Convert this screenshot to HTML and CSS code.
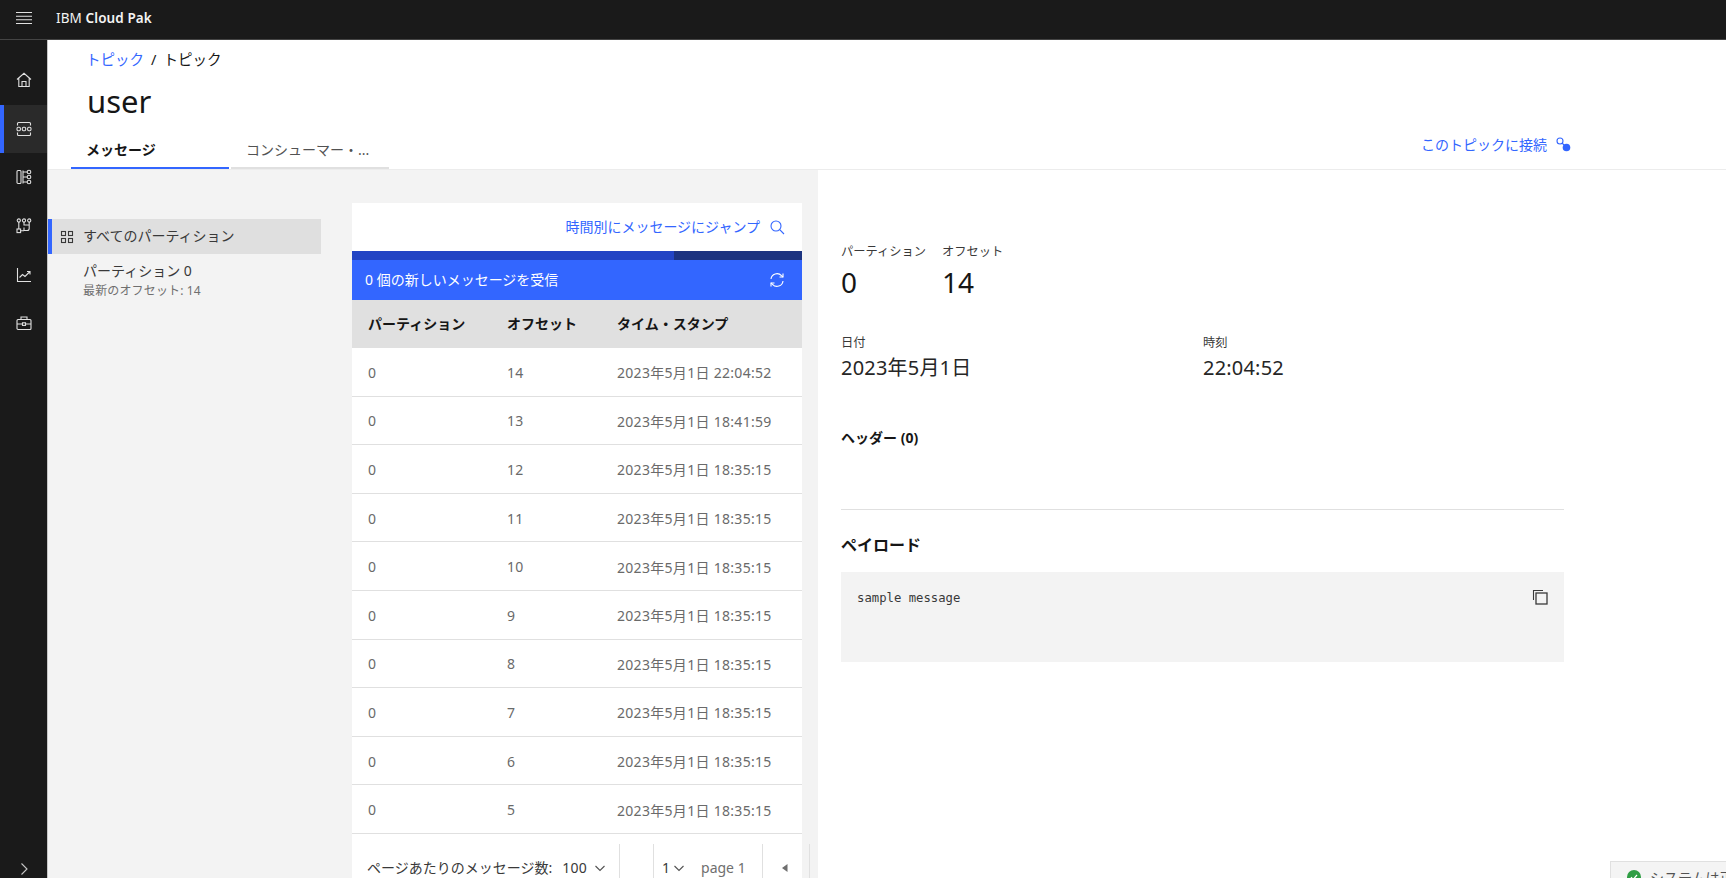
FILE: index.html
```html
<!DOCTYPE html>
<html lang="ja">
<head>
<meta charset="utf-8">
<title>user</title>
<link rel="stylesheet" href="styles.css">
</head>
<body>
<header class="topbar">
  <svg class="menu-icon" width="16" height="14" viewBox="0 0 16 14"><path d="M0 1.500h16M0 5.200h16M0 8.800h16M0 12.500h16" stroke="#e0e0e0" stroke-width="1.100" fill="none"/></svg>
  <span class="brand">IBM <b>Cloud Pak</b></span>
</header>
<div class="shell">
  <nav class="sidenav">
    <a class="nav-item"><svg class="nav-icon" viewBox="0 0 16 16"><path d="M1 7.500 8 1.300l7 6.200M2.800 6.200v8.300h10.400V6.200M6 14.500V9.500h4v5"/></svg></a>
    <a class="nav-item nav-active"><svg class="nav-icon" viewBox="0 0 16 16"><path d="M1.500 4.500V2.500a1 1 0 0 1 1-1h11a1 1 0 0 1 1 1v2M1.500 11.500v2a1 1 0 0 0 1 1h11a1 1 0 0 0 1-1v-2"/><rect x="1" y="6.300" width="3.400" height="3.400" rx="1.200"/><rect x="6.300" y="6.300" width="3.400" height="3.400" rx="1.200"/><rect x="11.600" y="6.300" width="3.400" height="3.400" rx="1.200"/></svg></a>
    <a class="nav-item"><svg class="nav-icon" viewBox="0 0 16 16"><rect x="1" y="1.500" width="4" height="13" rx="1"/><path d="M7 1.500v13M7 3h4M7 8h4M7 13h4"/><circle cx="13" cy="3" r="1.800"/><circle cx="13" cy="8" r="1.800"/><circle cx="13" cy="13" r="1.800"/></svg></a>
    <a class="nav-item"><svg class="nav-icon" viewBox="0 0 16 16"><circle cx="2.800" cy="2.500" r="1.600"/><circle cx="8" cy="2.500" r="1.600"/><circle cx="13.200" cy="2.500" r="1.600"/><rect x="1" y="11" width="3.600" height="3.600"/><path d="M2.800 4.100V11M8 4.100V7H13.200M13.200 4.100v6.400a2 2 0 0 1-2 2H8V9.500M4.600 12.800H8"/></svg></a>
    <a class="nav-item"><svg class="nav-icon" viewBox="0 0 16 16"><path d="M1.500 1v13.500H15M3.500 10.500l3-3 2.500 2L13.500 5M11 4.500h3V7.500"/></svg></a>
    <a class="nav-item"><svg class="nav-icon" viewBox="0 0 16 16"><rect x="1" y="4.500" width="14" height="10" rx="1"/><path d="M5 4.500V2h6v2.500M1 9h5M10 9h5"/><rect x="6.500" y="7.800" width="3" height="2.600"/></svg></a>
    <a class="nav-toggle"><svg width="16" height="16" viewBox="0 0 16 16"><path d="M5.500 2.500 11 8l-5.500 5.500" stroke="#c6c6c6" stroke-width="1.100" fill="none"/></svg></a>
  </nav>
  <main class="content">
    <section class="page-head">
      <div class="crumbs"><a class="link">トピック</a><span class="crumb-sep">/</span><span>トピック</span></div>
      <h1 class="title">user</h1>
      <div class="tab-row">
        <div class="tabs">
          <div class="tab tab-on">メッセージ</div>
          <div class="tab">コンシューマー・...</div>
        </div>
        <a class="connect link">このトピックに接続
          <svg width="16" height="16" viewBox="0 0 16 16"><circle cx="5" cy="5" r="3" fill="none" stroke="#3366ff" stroke-width="1.100"/><path d="M7 7l3 3" stroke="#3366ff" stroke-width="1.100"/><circle cx="11.500" cy="11.500" r="3.800" fill="#3366ff"/></svg>
        </a>
      </div>
    </section>
    <div class="panels">
      <aside class="partitions">
        <div class="part-all">
          <svg width="14" height="14" viewBox="0 0 14 14"><g fill="none" stroke="#393939" stroke-width="1.100"><rect x="1.500" y="1.500" width="4" height="4"/><rect x="8.500" y="1.500" width="4" height="4"/><rect x="1.500" y="8.500" width="4" height="4"/><rect x="8.500" y="8.500" width="4" height="4"/></g></svg>
          <span class="part-all-text">すべてのパーティション</span>
        </div>
        <div class="part-one">
          <div>パーティション 0</div>
          <div class="part-sub">最新のオフセット: 14</div>
        </div>
      </aside>
      <section class="table-card">
        <div class="jump link"><span class="lift">時間別にメッセージにジャンプ</span>
          <svg width="16" height="16" viewBox="0 0 16 16"><circle cx="7" cy="7" r="5" fill="none" stroke="#3366ff" stroke-width="1.100"/><path d="M10.700 10.700 15 15" stroke="#3366ff" stroke-width="1.100"/></svg>
        </div>
        <div class="progress"><div class="progress-dark"></div></div>
        <div class="notice"><span class="lift">0 個の新しいメッセージを受信</span>
          <svg width="16" height="16" viewBox="0 0 16 16"><g fill="none" stroke="#fff" stroke-width="1.100"><path d="M2 7a6 6 0 0 1 10.500-3.300L14 5M14 9a6 6 0 0 1-10.500 3.300L2 11"/><path d="M14 1.500V5h-3.500M2 14.500V11h3.500"/></g></svg>
        </div>
        <div class="row row-head"><span>パーティション</span><span>オフセット</span><span>タイム・スタンプ</span></div>
        <div class="row"><span>0</span><span>14</span><span>2023年5月1日 22:04:52</span></div>
        <div class="row"><span>0</span><span>13</span><span>2023年5月1日 18:41:59</span></div>
        <div class="row"><span>0</span><span>12</span><span>2023年5月1日 18:35:15</span></div>
        <div class="row"><span>0</span><span>11</span><span>2023年5月1日 18:35:15</span></div>
        <div class="row"><span>0</span><span>10</span><span>2023年5月1日 18:35:15</span></div>
        <div class="row"><span>0</span><span>9</span><span>2023年5月1日 18:35:15</span></div>
        <div class="row"><span>0</span><span>8</span><span>2023年5月1日 18:35:15</span></div>
        <div class="row"><span>0</span><span>7</span><span>2023年5月1日 18:35:15</span></div>
        <div class="row"><span>0</span><span>6</span><span>2023年5月1日 18:35:15</span></div>
        <div class="row"><span>0</span><span>5</span><span>2023年5月1日 18:35:15</span></div>
        <div class="pager">
          <div class="pg pg-size">ページあたりのメッセージ数:<span class="pg-num">100</span>
            <svg class="chev" width="12" height="12" viewBox="0 0 12 12"><path d="M1.500 4 6 8.500 10.500 4"/></svg>
          </div>
          <div class="pg pg-gap"></div>
          <div class="pg pg-page"><span>1</span>
            <svg class="chev" width="12" height="12" viewBox="0 0 12 12"><path d="M1.500 4 6 8.500 10.500 4"/></svg>
            <span class="pg-label">page 1</span>
          </div>
          <div class="pg pg-prev"><svg width="6" height="8" viewBox="0 0 6 8"><path d="M5.500 0v8L0 4z" fill="#6f6f6f"/></svg></div>
          <div class="pg pg-end"></div>
        </div>
      </section>
      <section class="detail">
        <div class="stat-row">
          <div class="stat stat-part"><div class="label">パーティション</div><div class="big">0</div></div>
          <div class="stat"><div class="label">オフセット</div><div class="big">14</div></div>
        </div>
        <div class="date-row">
          <div><div class="label">日付</div><div class="mid">2023年5月1日</div></div>
          <div><div class="label">時刻</div><div class="mid">22:04:52</div></div>
        </div>
        <h3 class="hdr-title">ヘッダー (0)</h3>
        <hr class="rule">
        <h2 class="payload-title">ペイロード</h2>
        <div class="code">
          <code>sample message</code>
          <svg class="copy" width="16" height="16" viewBox="0 0 16 16"><path d="M1.500 11V1.500H11" fill="none" stroke="#393939" stroke-width="1.100"/><rect x="4" y="4" width="11" height="11" fill="none" stroke="#393939" stroke-width="1.300"/></svg>
        </div>
      </section>
    </div>
  </main>
</div>
<div class="status">
  <svg class="status-icon" width="14" height="14" viewBox="0 0 14 14"><circle cx="7" cy="7" r="7" fill="#2f9e44"/><path d="M4 7.200 6.200 9.400 10 5" fill="none" stroke="#fff" stroke-width="1.200"/></svg>
  <span>システムは正常です</span>
</div>
</body>
</html>
```
FILE: styles.css
```css
* { box-sizing: border-box; }
html, body { height: 100%; }
body {
  margin: 0;
  height: 878px;
  overflow: hidden;
  position: relative;
  display: flex;
  flex-direction: column;
  font-family: "Noto Sans", "Noto Sans CJK JP", sans-serif;
  font-size: 14px;
  color: #161616;
  background: #fff;
}
.link { color: #3366ff; }
.lift { margin-bottom: 2px; }

.topbar {
  height: 40px;
  flex: none;
  display: flex;
  align-items: center;
  padding-left: 16px;
  padding-bottom: 3px;
  background: #1a1a1a;
  border-bottom: 1px solid #444;
  color: #f4f4f4;
}
.menu-icon { margin-right: 24px; }
.brand { font-size: 13.500px; letter-spacing: .1px; }
.brand b { font-weight: 600; }

.shell { flex: 1; display: flex; min-height: 0; }
.sidenav {
  width: 48px;
  flex: none;
  display: flex;
  flex-direction: column;
  padding-top: 16px;
  background: #1a1a1a;
  border-right: 1px solid #c6c6c6;
}
.nav-item {
  height: 48.600px;
  flex: none;
  display: flex;
  align-items: center;
  justify-content: center;
  border-left: 4px solid transparent;
  padding-right: 4px;
}
.nav-active { background: #2a2a2a; border-left-color: #3366ff; }
.nav-icon {
  width: 16px;
  height: 16px;
  fill: none;
  stroke: #e0e0e0;
  stroke-width: 1.100;
}
.nav-toggle {
  margin-top: auto;
  height: 17px;
  display: flex;
  justify-content: center;
}

.content { flex: 1; min-width: 0; display: flex; flex-direction: column; }
.page-head {
  height: 130px;
  flex: none;
  display: flex;
  flex-direction: column;
  border-bottom: 1px solid #ececec;
}
.crumbs {
  height: 20px;
  margin-top: 9px;
  margin-left: 38px;
  display: flex;
  align-items: center;
  font-size: 14.500px;
  line-height: 20px;
}
.crumb-sep { margin: 0 7px; }
.title {
  margin: 12px 0 0 39px;
  font-size: 31px;
  font-weight: 400;
  line-height: 40px;
}
.tab-row {
  margin-top: auto;
  display: flex;
  align-items: flex-end;
  justify-content: space-between;
  padding-left: 23px;
  padding-right: 155px;
}
.tabs { display: flex; gap: 2px; }
.tab {
  width: 158px;
  height: 36px;
  padding: 0 15px;
  font-size: 14px;
  line-height: 34px;
  color: #525252;
  border-bottom: 2px solid #e0e0e0;
  white-space: nowrap;
}
.tab-on { color: #161616; font-weight: 700; border-bottom-color: #3366ff; }
.connect {
  display: flex;
  align-items: center;
  gap: 8px;
  height: 36px;
  padding-bottom: 15px;
}

.panels { flex: 1; min-height: 0; display: flex; background: #f3f3f3; }
.partitions {
  width: 304px;
  flex: none;
  padding-top: 49px;
  padding-right: 31px;
}
.part-all {
  height: 35px;
  display: flex;
  align-items: center;
  gap: 9px;
  padding-left: 8px;
  background: #dfdfdf;
  border-left: 4px solid #3366ff;
  color: #393939;
}
.part-all-text { margin-bottom: 4px; }
.part-one {
  padding: 7px 0 0 35px;
  color: #393939;
  line-height: 20px;
}
.part-sub {
  margin-top: 1px;
  font-size: 12px;
  letter-spacing: .15px;
  color: #6f6f6f;
  line-height: 18px;
}

.table-card {
  width: 450px;
  flex: none;
  margin-top: 33px;
  background: #fff;
}
.jump {
  height: 48px;
  display: flex;
  align-items: center;
  justify-content: flex-end;
  gap: 9px;
  padding-right: 17px;
}
.progress { height: 9px; background: #2244c4; }
.progress-dark { width: 128px; height: 100%; margin-left: auto; background: #1c3380; }
.notice {
  height: 40px;
  display: flex;
  align-items: center;
  justify-content: space-between;
  padding: 0 17px 0 13px;
  background: #3366ff;
  color: #fff;
}
.row {
  height: 48.600px;
  display: grid;
  grid-template-columns: 139px 110px 1fr;
  align-items: center;
  padding-left: 16px;
  padding-top: 1px;
  border-bottom: 1px solid #e0e0e0;
  color: #6a6a6a;
  letter-spacing: .3px;
  white-space: nowrap;
}
.row-head {
  height: 48px;
  padding-top: 0;
  padding-bottom: 2px;
  border-bottom: none;
  background: #e0e0e0;
  color: #161616;
  font-weight: 700;
  letter-spacing: 0;
}
.pager {
  display: flex;
  height: 60px;
  padding-top: 10px;
  color: #393939;
}
.pg {
  flex: none;
  display: flex;
  align-items: flex-start;
  border-left: 1px solid #e0e0e0;
  padding-top: 14px;
  line-height: 20px;
  white-space: nowrap;
}
.pg-size { width: 267px; padding-left: 15px; border-left: none; }
.pg-num { margin-left: 10px; margin-right: 4px; letter-spacing: .3px; }
.pg-gap { width: 34px; }
.pg-page { width: 109px; padding-left: 8px; }
.pg-label { margin-left: 16px; color: #6f6f6f; }
.pg-prev { width: 47px; padding-left: 19px; padding-top: 20px; }
.pg-end { width: 1px; }
.chev { fill: none; stroke: #525252; stroke-width: 1.100; margin-left: 3px; margin-top: 4px; }

.detail {
  flex: 1;
  min-width: 0;
  margin-left: 16px;
  padding: 72px 162px 0 23px;
  background: #fff;
}
.stat-row { display: flex; }
.stat-part { width: 101px; }
.label { font-size: 12.250px; line-height: 20px; color: #393939; }
.big { font-size: 28px; line-height: 36px; margin-top: 2px; }
.date-row {
  display: grid;
  grid-template-columns: 362px 1fr;
  margin-top: 33px;
}
.mid { font-size: 20px; letter-spacing: .2px; line-height: 28px; margin-top: 1px; color: #262626; }
.hdr-title { margin: 46px 0 0; font-size: 14px; font-weight: 700; line-height: 20px; }
.rule { margin: 61px 0 0; border: 0; border-top: 1px solid #e0e0e0; }
.payload-title { margin: 24px 0 0; font-size: 16px; font-weight: 700; line-height: 22px; }
.code {
  height: 90px;
  margin-top: 16px;
  padding: 18px 16px;
  display: flex;
  justify-content: space-between;
  background: #f3f3f3;
}
.code code {
  font-family: "DejaVu Sans Mono", "Liberation Mono", monospace;
  font-size: 12.250px;
  line-height: 16px;
  color: #393939;
}
.copy { margin-top: -1px; }

.status {
  position: absolute;
  top: 861px;
  right: -40px;
  width: 156px;
  height: 40px;
  display: flex;
  align-items: flex-start;
  gap: 9px;
  padding: 8px 0 0 16px;
  background: #f4f4f4;
  border: 1px solid #e0e0e0;
  color: #525252;
  line-height: 16px;
  white-space: nowrap;
  overflow: hidden;
}
.status-icon { flex: none; }
```
